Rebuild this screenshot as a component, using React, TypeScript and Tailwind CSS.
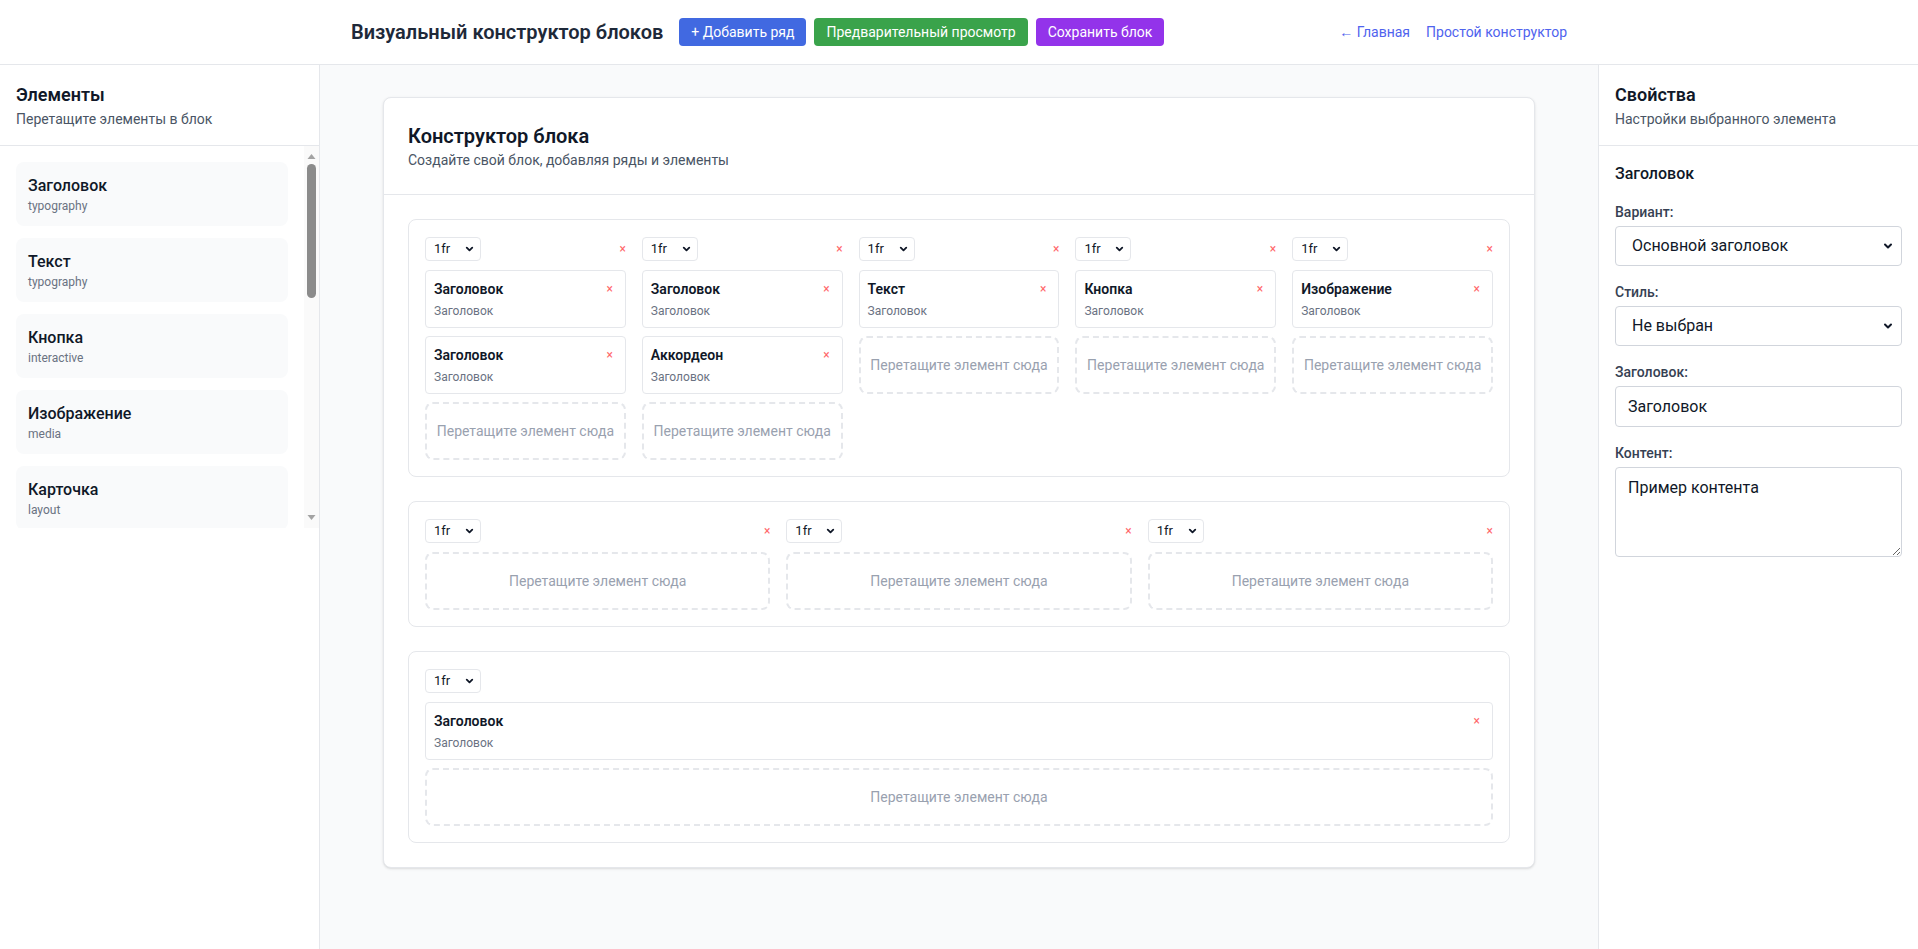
import { ChevronDown } from "lucide-react";

interface Item {
  title: string
  sub: string
}

const palette: Item[] = [
  { title: "Заголовок", sub: "typography" },
  { title: "Текст", sub: "typography" },
  { title: "Кнопка", sub: "interactive" },
  { title: "Изображение", sub: "media" },
  { title: "Карточка", sub: "layout" },
  { title: "Аккордеон", sub: "interactive" },
  { title: "Список", sub: "typography" },
  { title: "Разделитель", sub: "layout" },
  { title: "Видео", sub: "media" },
  { title: "Форма", sub: "interactive" },
  { title: "Галерея", sub: "media" },
  { title: "Таблица", sub: "layout" },
  { title: "Цитата", sub: "typography" },
  { title: "Иконка", sub: "media" },
  { title: "Контейнер", sub: "layout" },
];

interface Column {
  items: string[]
}

interface Row {
  cols: Column[]
  removable: boolean
}

const rows: Row[] = [
  {
    removable: true,
    cols: [
      { items: ["Заголовок", "Заголовок"] },
      { items: ["Заголовок", "Аккордеон"] },
      { items: ["Текст"] },
      { items: ["Кнопка"] },
      { items: ["Изображение"] },
    ],
  },
  {
    removable: true,
    cols: [{ items: [] }, { items: [] }, { items: [] }],
  },
  {
    removable: false,
    cols: [{ items: ["Заголовок"] }],
  },
];

const gridCols: Record<number, string> = {
  1: "grid-cols-1",
  3: "grid-cols-3",
  5: "grid-cols-5",
};

function FrSelect() {
  return (
    <span className="relative inline-flex">
      <select className="h-6 appearance-none rounded border border-gray-200 bg-white pl-2 pr-5 text-[13px] text-gray-900">
        <option>1fr</option>
        <option>2fr</option>
        <option>auto</option>
      </select>
      <ChevronDown size={11} strokeWidth={4} className="pointer-events-none absolute right-1.5 top-1/2 -translate-y-1/2 text-gray-900" />
    </span>
  )
}

function DropZone() {
  return (
    <div className="flex h-[58px] items-center justify-center rounded-lg border-2 border-dashed border-gray-200 text-sm text-gray-400">
      Перетащите элемент сюда
    </div>
  )
}

function ElementCard({ title }: { title: string }) {
  return (
    <div className="rounded border border-gray-200 bg-white p-2">
      <div className="flex items-center justify-between">
        <p className="text-sm font-semibold text-gray-900">{title}</p>
        <button className="pr-1 text-xs leading-none text-red-400">×</button>
      </div>
      <p className="mt-1 text-xs text-gray-500">Заголовок</p>
    </div>
  )
}

function BuilderRow({ row }: { row: Row }) {
  return (
    <div className="rounded-lg border border-gray-200 bg-white p-4">
      <div className={`grid gap-4 ${gridCols[row.cols.length]}`}>
        {row.cols.map((col, i) => (
          <div key={i} className="flex flex-col gap-2">
            <div className="flex h-[26px] items-center justify-between">
              <FrSelect />
              {row.removable && <button className="text-xs leading-none text-red-400">×</button>}
            </div>
            {col.items.map((t, j) => (
              <ElementCard key={j} title={t} />
            ))}
            <DropZone />
          </div>
        ))}
      </div>
    </div>
  )
}

function Field({ label, children }: { label: string; children: React.ReactNode }) {
  return (
    <div>
      <label className="mb-1 block text-sm font-medium text-gray-700">{label}</label>
      {children}
    </div>
  )
}

function PanelSelect({ value }: { value: string }) {
  return (
    <span className="relative block">
      <select className="h-10 w-full appearance-none rounded border border-gray-300 bg-white pl-4 pr-8 text-base text-gray-900">
        <option>{value}</option>
      </select>
      <ChevronDown size={12} strokeWidth={4} className="pointer-events-none absolute right-2 top-1/2 -translate-y-1/2 text-gray-900" />
    </span>
  )
}

// drawn stand-in for the classic scrollbar of the palette list
function FakeScrollbar() {
  return (
    <div className="flex w-[15px] shrink-0 flex-col items-center bg-[#fafafa]">
      <svg width="9" height="18" viewBox="0 0 9 18" className="shrink-0">
        <path d="M0.5 13 L4.5 8 L8.5 13 Z" fill="#a3a3a3" />
      </svg>
      <div className="h-[134px] w-[9px] rounded-full bg-[#8b8b8b]" />
      <div className="flex-1" />
      <svg width="9" height="18" viewBox="0 0 9 18" className="shrink-0">
        <path d="M0.5 5 L4.5 10 L8.5 5 Z" fill="#a3a3a3" />
      </svg>
    </div>
  )
}

export default function App() {
  return (
    <div className="flex h-screen flex-col bg-white font-['Roboto',sans-serif] text-gray-900">
      <header className="h-[65px] shrink-0 border-b border-gray-200 bg-white">
        <div className="mx-auto flex h-full max-w-7xl items-center justify-between px-8">
          <div className="flex items-center gap-4">
            <h1 className="text-xl font-semibold text-gray-800">Визуальный конструктор блоков</h1>
            <div className="flex gap-2">
              <button className="rounded bg-[#4169e1] px-3 py-1 text-sm text-white">+ Добавить ряд</button>
              <button className="rounded bg-[#3aa34b] px-3 py-1 text-sm text-white">Предварительный просмотр</button>
              <button className="rounded bg-[#9333ea] px-3 py-1 text-sm text-white">Сохранить блок</button>
            </div>
          </div>
          <nav className="flex gap-4 text-sm text-[#4f63ee]">
            <a href="#">← Главная</a>
            <a href="#">Простой конструктор</a>
          </nav>
        </div>
      </header>

      <div className="flex min-h-0 flex-1">
        <aside className="w-80 shrink-0 border-r border-gray-200 bg-white">
          <div className="border-b border-gray-200 p-4">
            <h2 className="text-lg font-semibold text-gray-900">Элементы</h2>
            <p className="text-sm text-gray-600">Перетащите элементы в блок</p>
          </div>
          <div className="flex h-[382px]">
            <div className="flex-1 overflow-y-auto p-4 [scrollbar-width:none]">
              <div className="flex flex-col gap-3">
                {palette.map((it, i) => (
                  <div key={i} className="cursor-move rounded-lg bg-gray-50 p-3">
                    <p className="font-medium text-gray-900">{it.title}</p>
                    <p className="text-xs text-gray-500">{it.sub}</p>
                  </div>
                ))}
              </div>
            </div>
            <FakeScrollbar />
          </div>
        </aside>

        <main className="flex-1 overflow-auto bg-gray-50 p-8">
          <div className="mx-auto max-w-6xl rounded-lg border border-gray-200 bg-white shadow-sm">
            <div className="border-b border-gray-200 p-6">
              <h2 className="text-xl font-semibold text-gray-900">Конструктор блока</h2>
              <p className="text-sm text-gray-600">Создайте свой блок, добавляя ряды и элементы</p>
            </div>
            <div className="flex flex-col gap-6 p-6">
              {rows.map((r, i) => (
                <BuilderRow key={i} row={r} />
              ))}
            </div>
          </div>
        </main>

        <aside className="w-80 shrink-0 border-l border-gray-200 bg-white">
          <div className="border-b border-gray-200 p-4">
            <h2 className="text-lg font-semibold text-gray-900">Свойства</h2>
            <p className="text-sm text-gray-600">Настройки выбранного элемента</p>
          </div>
          <div className="p-4">
            <h3 className="mb-4 font-medium text-gray-900">Заголовок</h3>
            <div className="flex flex-col gap-4">
              <Field label="Вариант:">
                <PanelSelect value="Основной заголовок" />
              </Field>
              <Field label="Стиль:">
                <PanelSelect value="Не выбран" />
              </Field>
              <Field label="Заголовок:">
                <input defaultValue="Заголовок" className="h-[41px] w-full rounded border border-gray-300 px-3 text-base text-gray-900" />
              </Field>
              <Field label="Контент:">
                <textarea rows={3} defaultValue="Пример контента" className="block w-full rounded border border-gray-300 px-3 py-2 text-base text-gray-900" />
              </Field>
            </div>
          </div>
        </aside>
      </div>
    </div>
  )
}
